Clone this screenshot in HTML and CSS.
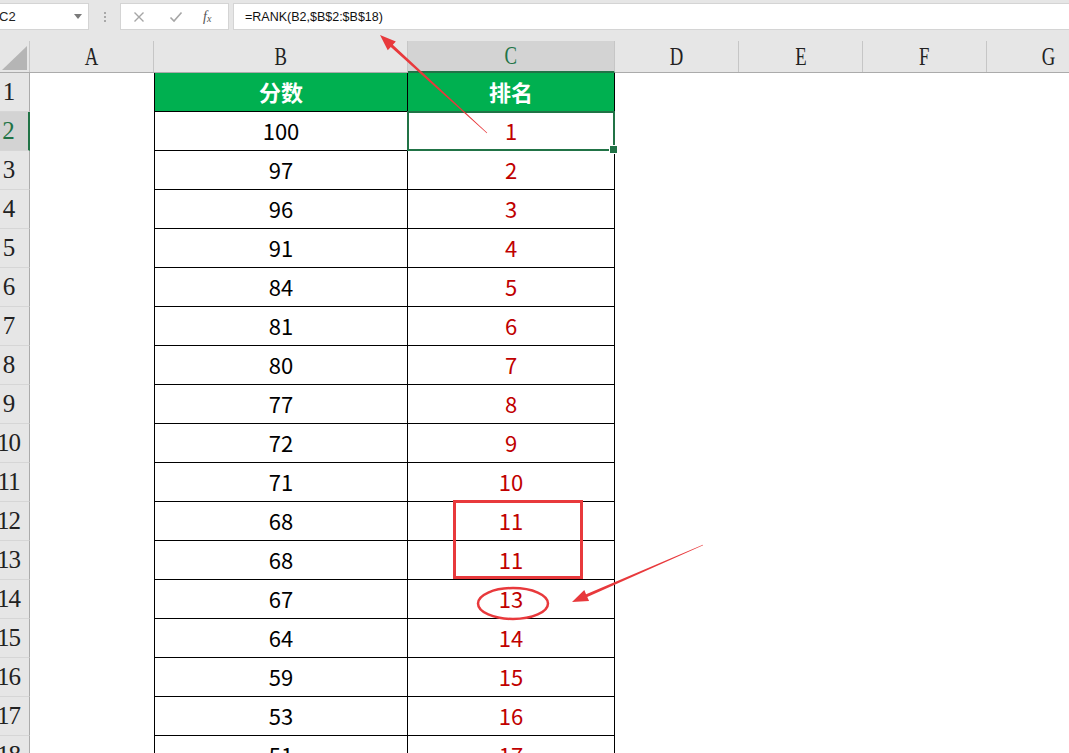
FILE: index.html
```html
<!DOCTYPE html>
<html lang="zh-CN">
<head>
<meta charset="utf-8">
<title>RANK</title>
<link rel="stylesheet" href="styles.css">
</head>
<body>
<div class="app">
  <div class="fbar">
    <div class="namebox"><span class="nb-text">C2</span><span class="nb-arrow"></span></div>
    <div class="dots"><i></i><i></i><i></i></div>
    <div class="fxbtns">
      <svg class="ic" width="12" height="12" viewBox="0 0 12 12"><path d="M1.5 1.5L10.5 10.5M10.5 1.5L1.5 10.5" stroke="#a6a6a6" stroke-width="1.4" fill="none"/></svg>
      <svg class="ic" width="14" height="12" viewBox="0 0 14 12"><path d="M1.5 6.5L5 10L12.5 1.5" stroke="#a6a6a6" stroke-width="1.6" fill="none"/></svg>
      <span class="fx">f<sub>x</sub></span>
    </div>
    <div class="formula">=RANK(B2,$B$2:$B$18)</div>
  </div>

  <div class="sheet">
    <div class="row colhead">
      <div class="corner"><svg width="30" height="32" viewBox="0 0 30 32"><path d="M27 5L27 29L2 29Z" fill="#b5b5b5"/></svg></div>
      <div class="ch"><span>A</span></div>
      <div class="ch"><span>B</span></div>
      <div class="ch sel"><span>C</span></div>
      <div class="ch"><span>D</span></div>
      <div class="ch"><span>E</span></div>
      <div class="ch"><span>F</span></div>
      <div class="ch"><span>G</span></div>
    </div>

    <div class="row">
      <div class="rh">1</div><div class="c"></div>
      <div class="c b head">分数</div><div class="c k head">排名</div>
      <div class="c"></div><div class="c"></div><div class="c"></div><div class="c"></div>
    </div>
    <div class="row">
      <div class="rh sel">2</div><div class="c"></div>
      <div class="c b">100</div><div class="c k active">1</div>
      <div class="c"></div><div class="c"></div><div class="c"></div><div class="c"></div>
    </div>
    <div class="row">
      <div class="rh">3</div><div class="c"></div>
      <div class="c b">97</div><div class="c k">2</div>
      <div class="c"></div><div class="c"></div><div class="c"></div><div class="c"></div>
    </div>
    <div class="row">
      <div class="rh">4</div><div class="c"></div>
      <div class="c b">96</div><div class="c k">3</div>
      <div class="c"></div><div class="c"></div><div class="c"></div><div class="c"></div>
    </div>
    <div class="row">
      <div class="rh">5</div><div class="c"></div>
      <div class="c b">91</div><div class="c k">4</div>
      <div class="c"></div><div class="c"></div><div class="c"></div><div class="c"></div>
    </div>
    <div class="row">
      <div class="rh">6</div><div class="c"></div>
      <div class="c b">84</div><div class="c k">5</div>
      <div class="c"></div><div class="c"></div><div class="c"></div><div class="c"></div>
    </div>
    <div class="row">
      <div class="rh">7</div><div class="c"></div>
      <div class="c b">81</div><div class="c k">6</div>
      <div class="c"></div><div class="c"></div><div class="c"></div><div class="c"></div>
    </div>
    <div class="row">
      <div class="rh">8</div><div class="c"></div>
      <div class="c b">80</div><div class="c k">7</div>
      <div class="c"></div><div class="c"></div><div class="c"></div><div class="c"></div>
    </div>
    <div class="row">
      <div class="rh">9</div><div class="c"></div>
      <div class="c b">77</div><div class="c k">8</div>
      <div class="c"></div><div class="c"></div><div class="c"></div><div class="c"></div>
    </div>
    <div class="row">
      <div class="rh">10</div><div class="c"></div>
      <div class="c b">72</div><div class="c k">9</div>
      <div class="c"></div><div class="c"></div><div class="c"></div><div class="c"></div>
    </div>
    <div class="row">
      <div class="rh">11</div><div class="c"></div>
      <div class="c b">71</div><div class="c k">10</div>
      <div class="c"></div><div class="c"></div><div class="c"></div><div class="c"></div>
    </div>
    <div class="row">
      <div class="rh">12</div><div class="c"></div>
      <div class="c b">68</div><div class="c k">11</div>
      <div class="c"></div><div class="c"></div><div class="c"></div><div class="c"></div>
    </div>
    <div class="row">
      <div class="rh">13</div><div class="c"></div>
      <div class="c b">68</div><div class="c k">11</div>
      <div class="c"></div><div class="c"></div><div class="c"></div><div class="c"></div>
    </div>
    <div class="row">
      <div class="rh">14</div><div class="c"></div>
      <div class="c b">67</div><div class="c k">13</div>
      <div class="c"></div><div class="c"></div><div class="c"></div><div class="c"></div>
    </div>
    <div class="row">
      <div class="rh">15</div><div class="c"></div>
      <div class="c b">64</div><div class="c k">14</div>
      <div class="c"></div><div class="c"></div><div class="c"></div><div class="c"></div>
    </div>
    <div class="row">
      <div class="rh">16</div><div class="c"></div>
      <div class="c b">59</div><div class="c k">15</div>
      <div class="c"></div><div class="c"></div><div class="c"></div><div class="c"></div>
    </div>
    <div class="row">
      <div class="rh">17</div><div class="c"></div>
      <div class="c b">53</div><div class="c k">16</div>
      <div class="c"></div><div class="c"></div><div class="c"></div><div class="c"></div>
    </div>
    <div class="row">
      <div class="rh">18</div><div class="c"></div>
      <div class="c b">51</div><div class="c k">17</div>
      <div class="c"></div><div class="c"></div><div class="c"></div><div class="c"></div>
    </div>
  </div>

  <svg class="annot" width="1069" height="753" viewBox="0 0 1069 753">
    <polygon fill="#e8393c" points="380,35 395.85,41.38 392.81,44.7 487.2,132.8 486.8,133.2 390.79,46.9 387.75,50.22"/>
    <polygon fill="#e8393c" points="572,602 589.06,601.12 587.27,597.0 703.12,545.28 702.88,544.72 586.07,594.24 584.28,590.12"/>
    <rect x="454.5" y="501.5" width="127" height="76" fill="none" stroke="#e8393c" stroke-width="3"/>
    <ellipse cx="513" cy="603.5" rx="35" ry="15.5" fill="none" stroke="#e8393c" stroke-width="2.5"/>
  </svg>
</div>
</body>
</html>
```

FILE: styles.css
```css
* { box-sizing: border-box; }
html, body { margin: 0; padding: 0; }
body {
  width: 1069px;
  height: 753px;
  overflow: hidden;
  background: #ffffff;
  font-family: "Liberation Sans", "Noto Sans CJK SC", sans-serif;
}
.app { position: relative; width: 1069px; height: 753px; overflow: hidden; }

/* formula bar */
.fbar {
  display: flex;
  align-items: flex-start;
  height: 41px;
  padding-top: 3px;
  background: #e6e6e6;
}
.namebox {
  margin-left: -14px;
  width: 103px;
  height: 27px;
  background: #fff;
  border: 1px solid #d4d4d4;
  display: flex;
  align-items: center;
  justify-content: space-between;
  padding: 0 6px 0 12px;
  font-size: 13px;
  color: #222;
}
.nb-arrow {
  width: 0; height: 0;
  border-left: 4px solid transparent;
  border-right: 4px solid transparent;
  border-top: 5px solid #7a7a7a;
}
.dots {
  width: 31px;
  height: 27px;
  display: flex;
  flex-direction: column;
  align-items: center;
  justify-content: center;
  gap: 2px;
}
.dots i { display: block; width: 2px; height: 2px; background: #a8a8a8; }
.fxbtns {
  width: 109px;
  height: 27px;
  background: #fff;
  border: 1px solid #d4d4d4;
  display: flex;
  align-items: center;
  padding-left: 12px;
  gap: 0;
}
.fxbtns .ic:nth-child(1) { margin-right: 24px; }
.fxbtns .ic:nth-child(2) { margin-right: 20px; }
.fx {
  font-family: "Liberation Serif", serif;
  font-style: italic;
  font-size: 14px;
  color: #555;
  line-height: 1;
}
.fx sub { font-size: 10px; vertical-align: -1px; }
.formula {
  margin-left: 4px;
  flex: 1;
  height: 27px;
  background: #fff;
  border: 1px solid #d4d4d4;
  border-right: none;
  padding-left: 11px;
  display: flex;
  align-items: center;
  font-size: 12.5px;
  color: #111;
}

/* sheet */
.sheet { display: flex; flex-direction: column; }
.row {
  display: grid;
  grid-template-columns: 30px 124px 254px 207px 124px 124px 124px 124px;
  height: 39px;
  flex: none;
}
.colhead {
  height: 32px;
  background: #e6e6e6;
  border-bottom: 1px solid #ababab;
}
.corner { height: 31px; border-right: 1px solid #c8c8c8; }
.corner svg { display: block; }
.ch {
  display: flex;
  align-items: center;
  justify-content: center;
  border-right: 1px solid #c6c6c6;
  font-family: "Liberation Serif", serif;
  font-size: 26px;
  color: #222;
  height: 31px;
}
.ch span { display: inline-block; transform: scaleX(0.72); }
.ch.sel {
  background: #d3d3d3;
  color: #217346;
  border-bottom: 2px solid #217346;
  height: 32px;
}

.rh {
  background: #e6e6e6;
  border-right: 1px solid #ababab;
  border-bottom: 1px solid #d6d6d6;
  font-family: "Liberation Serif", serif;
  font-size: 25px;
  color: #222;
  display: flex;
  align-items: center;
  justify-content: center;
  padding-right: 12px;
  letter-spacing: -1px;
  overflow: hidden;
  white-space: nowrap;
}
.rh.sel {
  background: #d3d3d3;
  color: #217346;
  border-right: 2px solid #217346;
}

.c {
  position: relative;
  display: flex;
  align-items: center;
  justify-content: center;
  font-family: "Noto Sans CJK SC", "Noto Sans", sans-serif;
  font-size: 22px;
  background: #fff;
  padding-bottom: 2px;
}
.c.b {
  border-left: 1px solid #000;
  border-right: 1px solid #000;
  border-bottom: 1px solid #000;
  color: #000;
}
.c.k {
  border-right: 1px solid #000;
  border-bottom: 1px solid #000;
  color: #c00000;
}
.c.head {
  background: #00b050;
  color: #fff;
  font-weight: bold;
}
.c.active::after {
  content: "";
  position: absolute;
  left: -1px;
  top: -1px;
  right: -1px;
  bottom: -1px;
  border: 2px solid #217346;
}
.c.active::before {
  content: "";
  position: absolute;
  right: -4px;
  bottom: -4px;
  width: 7px;
  height: 7px;
  background: #217346;
  border: 1px solid #fff;
  z-index: 2;
}

.annot {
  position: absolute;
  left: 0;
  top: 0;
  pointer-events: none;
}
```
